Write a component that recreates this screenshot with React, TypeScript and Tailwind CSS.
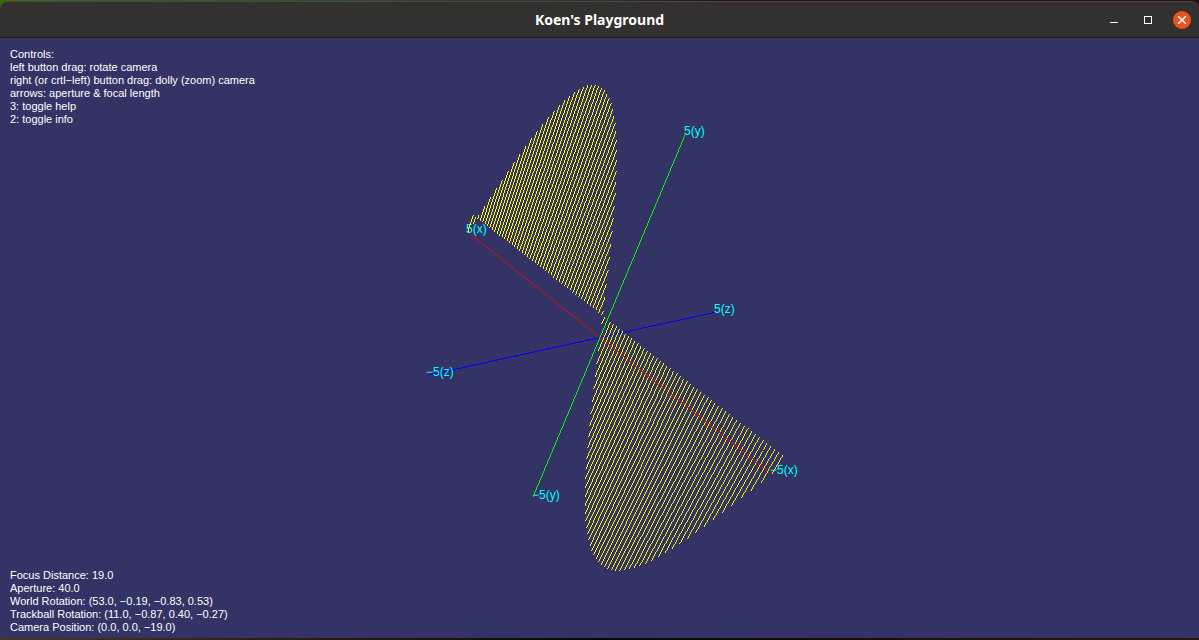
import React from "react";

type Point = [number, number];

const FOCAL = 816;
const DISTANCE = 19;
const WAVE = 0.616;

// Perspective projection of a world point on to the 1199 x 600 canvas.
function project(x: number, y: number, z: number): Point {
  const cx = -0.682 * x + 0.349 * y + 0.643 * z;
  const cy = 0.543 * x + 0.831 * y + 0.141 * z;
  const depth = DISTANCE - (-0.485 * x + 0.445 * y - 0.756 * z);
  return [600 + (FOCAL * cx) / depth, 299.5 - (FOCAL * cy) / depth];
}

// A one-pixel line: the stroke is narrowed by the slope so that each row
// (or column, for flat lines) is covered by about one pixel.
function Segment({ from, to, color }: { from: Point; to: Point; color: string }) {
  const dx = Math.abs(to[0] - from[0]);
  const dy = Math.abs(to[1] - from[1]);
  const width = (1.04 * Math.max(dx, dy)) / Math.hypot(dx, dy);
  return <line x1={from[0]} y1={from[1]} x2={to[0]} y2={to[1]} stroke={color} strokeWidth={width} />;
}

const hatch = Array.from({ length: 103 }, (_, i) => {
  const x = (i - 51) / 10;
  return { x, from: project(x, 0.5, 0), to: project(x, 5 * Math.sin(WAVE * x), 0) };
});

const labels = [
  { text: "5(x)", x: 466, y: 195 },
  { text: "−5(x)", x: 770, y: 436 },
  { text: "5(y)", x: 684, y: 97 },
  { text: "−5(y)", x: 532, y: 461 },
  { text: "5(z)", x: 714, y: 275 },
  { text: "−5(z)", x: 426, y: 338 },
];

const help = [
  "Controls:",
  "left button drag: rotate camera",
  "right (or crtl−left) button drag: dolly (zoom) camera",
  "arrows: aperture & focal length",
  "3: toggle help",
  "2: toggle info",
];

const info = [
  "Focus Distance: 19.0",
  "Aperture: 40.0",
  "World Rotation: (53.0, −0.19, −0.83, 0.53)",
  "Trackball Rotation: (11.0, −0.87, 0.40, −0.27)",
  "Camera Position: (0.0, 0.0, −19.0)",
];

function TitleBar() {
  return (
    <header className="grid h-[37px] grid-cols-[1fr_auto_1fr] items-center rounded-t-lg border-t border-b border-t-[#4a4846] border-b-[#1e1c1c] bg-[#333030] px-2">
      <span />
      <h1 className="font-['Noto_Sans','Open_Sans',sans-serif] text-sm font-bold text-white">Koen's Playground</h1>
      <div className="flex items-center justify-end gap-4">
        <button type="button" aria-label="Minimize" className="size-[18px]">
          <svg viewBox="0 0 18 18" className="size-full" shapeRendering="crispEdges">
            <path d="M5 11h8v1H5z" fill="#fff" />
          </svg>
        </button>
        <button type="button" aria-label="Maximize" className="size-[18px]">
          <svg viewBox="0 0 18 18" className="size-full" shapeRendering="crispEdges">
            <path d="M5 5h8v8H5zM6 6v6h6V6z" fill="#fff" fillRule="evenodd" />
          </svg>
        </button>
        <button type="button" aria-label="Close" className="size-[18px] rounded-full bg-[#e95420]">
          <svg viewBox="0 0 18 18" className="size-full">
            <path d="M5.2 5.2l7.6 7.6M12.8 5.2l-7.6 7.6" stroke="#fff" strokeWidth="1.5" />
          </svg>
        </button>
      </div>
    </header>
  );
}

function Lines({ lines }: { lines: string[] }) {
  return (
    <>
      {lines.map((line) => (
        <p key={line}>{line}</p>
      ))}
    </>
  );
}

export default function App() {
  return (
    <div className="flex min-h-screen flex-col bg-linear-to-r from-[#3a6a08] via-[#25352f] via-50% to-[#2c0a20] to-60% pt-px">
      <TitleBar />
      <main className="grid flex-1 bg-[#333366] font-['Liberation_Sans',Arial,sans-serif] text-[11px] leading-[13px] text-white">
        <svg
          viewBox="0 0 1199 600"
          className="col-start-1 row-start-1 size-full"
          fill="none"
          shapeRendering="crispEdges"
          role="img"
          aria-label="Sine surface with axes"
        >
          <Segment from={project(0, 0, -5)} to={project(0, 0, 5)} color="#0000ff" />
          <g fill="#00ffff" className="text-xs">
            {labels.map((label) => (
              <text key={label.text} x={label.x} y={label.y}>
                {label.text}
              </text>
            ))}
          </g>
          {hatch.map((line) => (
            <Segment key={line.x} from={line.from} to={line.to} color="#ffff00" />
          ))}
          <Segment from={project(-5, 0, 0)} to={project(5, 0, 0)} color="#ff0000" />
          <Segment from={project(0, -5, 0)} to={project(0, 5, 0)} color="#00ff00" />
        </svg>
        <div className="col-start-1 row-start-1 flex flex-col justify-between px-2.5 pt-2.5 pb-1">
          <section aria-label="Controls">
            <Lines lines={help} />
          </section>
          <section aria-label="Camera info">
            <Lines lines={info} />
          </section>
        </div>
      </main>
      <footer className="h-0.5 bg-linear-to-r from-[#4a3820] via-[#0a0805] to-[#2a1808]" />
    </div>
  );
}
